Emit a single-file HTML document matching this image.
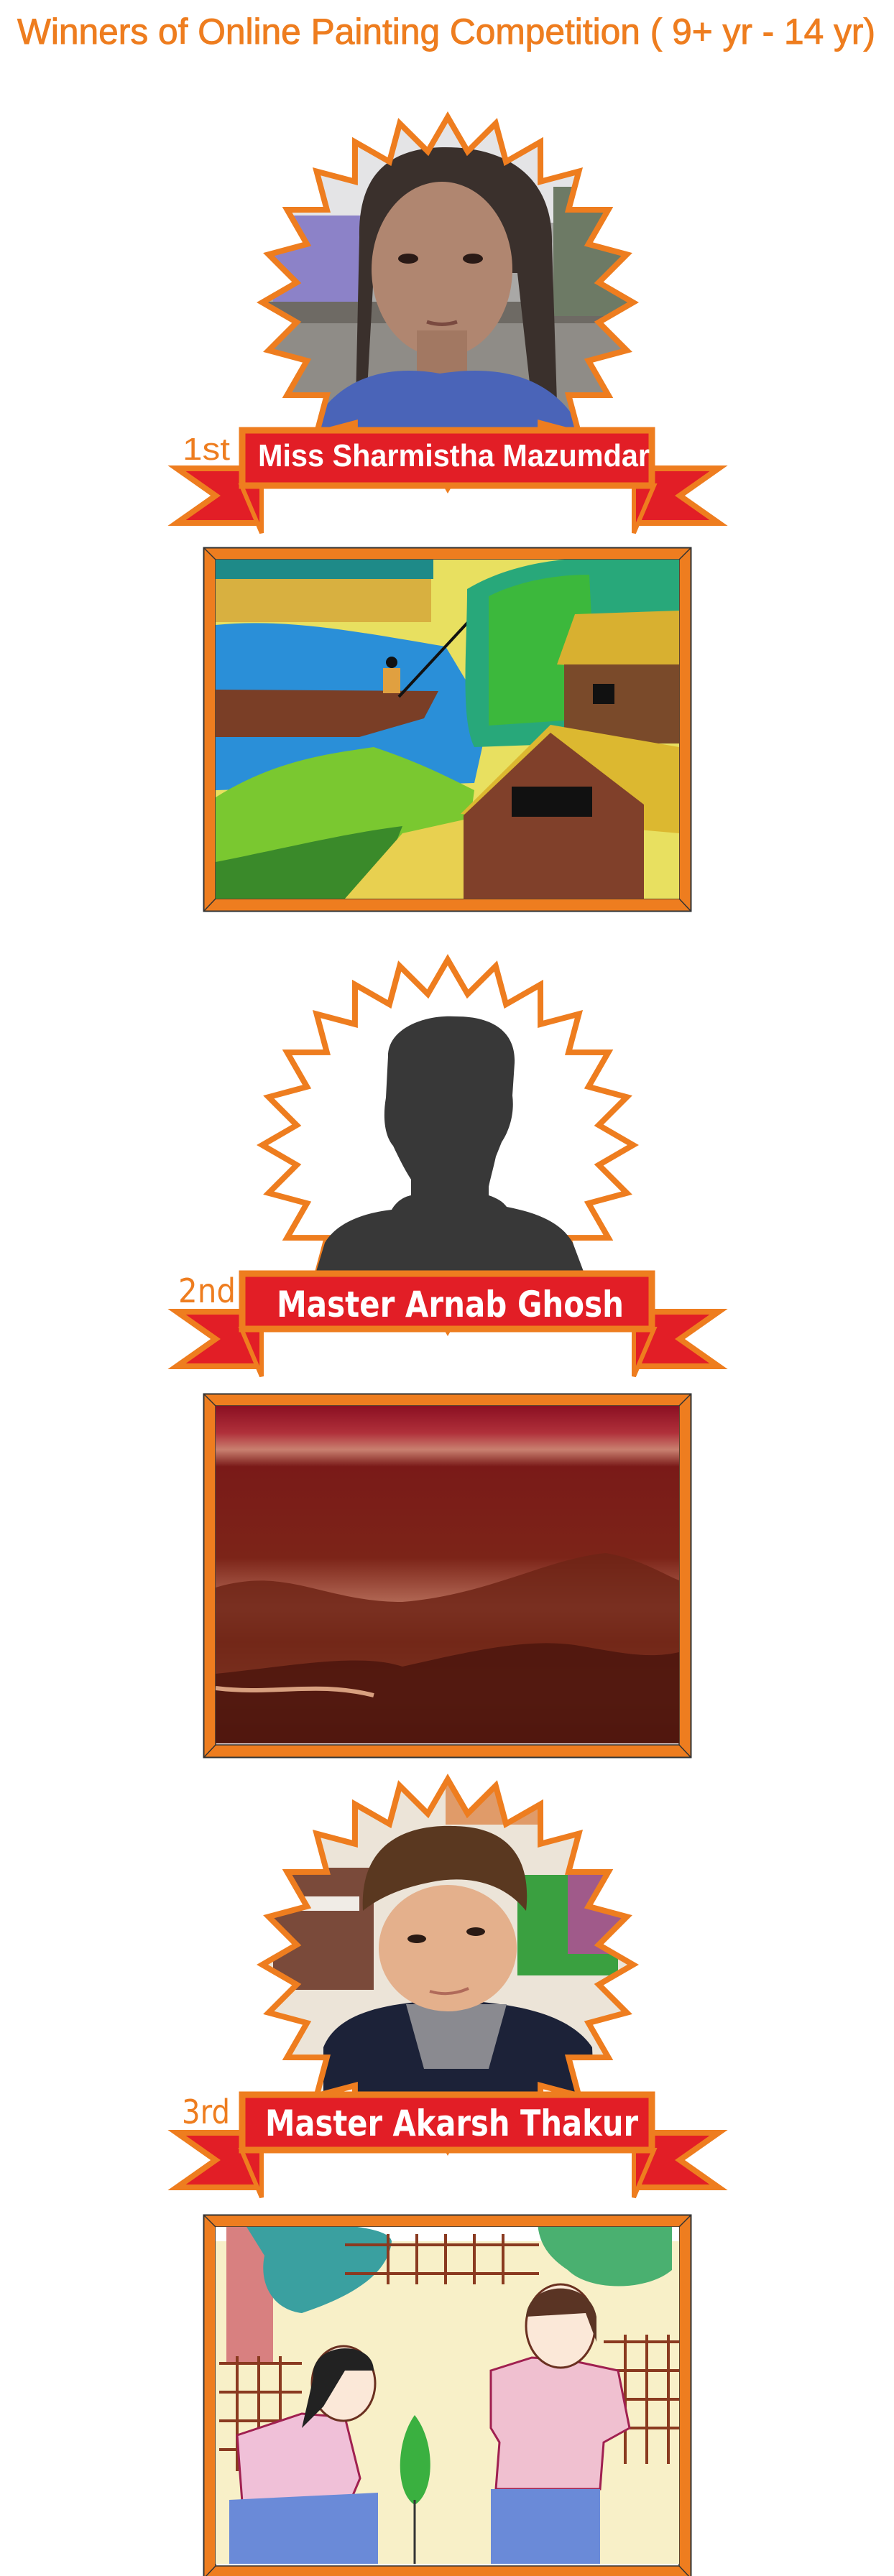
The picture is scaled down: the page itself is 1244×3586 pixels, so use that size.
<!DOCTYPE html>
<html><head><meta charset="utf-8">
<style>
html,body{margin:0;padding:0;background:#fff;}
svg{display:block;}
</style></head>
<body>
<svg width="1244" height="3586" viewBox="0 0 1244 3586" xmlns="http://www.w3.org/2000/svg">
<defs>
<polygon id="star" points="0,-258 27.7,-210.2 66.8,-249.2 81.1,-195.9 129,-223.4 129.1,-168.2 182.4,-182.4 168.2,-129.1 223.4,-129 195.9,-81.1 249.2,-66.8 210.2,-27.7 258,0 210.2,27.7 249.2,66.8 195.9,81.1 223.4,129 168.2,129.1 182.4,182.4 129.1,168.2 129,223.4 81.1,195.9 66.8,249.2 27.7,210.2 0,258 -27.7,210.2 -66.8,249.2 -81.1,195.9 -129,223.4 -129.1,168.2 -182.4,182.4 -168.2,129.1 -223.4,129 -195.9,81.1 -249.2,66.8 -210.2,27.7 -258,0 -210.2,-27.7 -249.2,-66.8 -195.9,-81.1 -223.4,-129 -168.2,-129.1 -182.4,-182.4 -129.1,-168.2 -129,-223.4 -81.1,-195.9 -66.8,-249.2 -27.7,-210.2"/>
<clipPath id="c1"><use href="#star" transform="translate(623,421)"/></clipPath>
<clipPath id="c3"><use href="#star" transform="translate(623,2735)"/></clipPath>
<clipPath id="p1"><rect x="300" y="779" width="645" height="472"/></clipPath>
<clipPath id="p2"><rect x="300" y="1957" width="645" height="470"/></clipPath>
<clipPath id="p3"><rect x="300" y="3100" width="645" height="469"/></clipPath>
<linearGradient id="g2" x1="0" y1="0" x2="0" y2="1">
<stop offset="0" stop-color="#8a0f22"/><stop offset="0.08" stop-color="#b0303a"/>
<stop offset="0.13" stop-color="#c98070"/><stop offset="0.18" stop-color="#7a1a18"/>
<stop offset="0.45" stop-color="#7c2418"/><stop offset="0.6" stop-color="#b8705c"/>
<stop offset="0.7" stop-color="#8a3a22"/><stop offset="0.85" stop-color="#c07a58"/>
<stop offset="1" stop-color="#5a1a10"/></linearGradient>
<g id="ribbon">
<polygon points="246,652 362,652 362,728 246,728 300,690" fill="#e21e26" stroke="#ee7d1f" stroke-width="8" stroke-linejoin="miter"/>
<polygon points="1000,652 884,652 884,728 1000,728 946,690" fill="#e21e26" stroke="#ee7d1f" stroke-width="8"/>
<polygon points="336,676 364,676 364,742" fill="#e21e26" stroke="#ee7d1f" stroke-width="6"/>
<polygon points="910,676 882,676 882,742" fill="#e21e26" stroke="#ee7d1f" stroke-width="6"/>
<rect x="337" y="599" width="570" height="77" fill="#e21e26" stroke="#ee7d1f" stroke-width="9"/>
</g>
<g id="frame">
<rect x="283.5" y="0.5" width="678" height="506" fill="#ee7d1f" stroke="#333" stroke-width="2"/>
<rect x="300" y="17" width="645" height="472" fill="#fff" stroke="#333" stroke-width="1.5"/>
<path d="M284 1 L300 17 M961 1 L945 17 M284 506 L300 489 M961 506 L945 489" stroke="#333" stroke-width="1.5"/>
</g>
</defs>

<text x="24" y="61" font-family="Liberation Sans, sans-serif" font-size="50" fill="#ee7d1f" stroke="#ee7d1f" stroke-width="0.9" textLength="1194" lengthAdjust="spacingAndGlyphs">Winners of Online Painting Competition ( 9+ yr - 14 yr)</text>

<!-- ===== Section 1 ===== -->
<g clip-path="url(#c1)">
<rect x="360" y="160" width="530" height="520" fill="#a9a8a6"/>
<rect x="360" y="160" width="530" height="150" fill="#e4e4e6"/>
<rect x="380" y="300" width="130" height="130" fill="#8c82c8"/>
<rect x="360" y="420" width="530" height="30" fill="#6e6a64"/>
<rect x="360" y="450" width="530" height="230" fill="#8f8c87"/>
<rect x="770" y="260" width="120" height="180" fill="#6d7a65"/>
<path d="M500 330 C498 240 545 205 620 205 C710 205 770 250 768 340 L775 560 L740 560 L720 380 L520 380 L510 560 L495 560 Z" fill="#3a302c"/>
<ellipse cx="615" cy="375" rx="98" ry="122" fill="#b08670"/>
<rect x="580" y="460" width="70" height="60" fill="#a27862"/>
<path d="M430 600 C470 520 545 508 612 520 C690 508 770 520 810 600 L810 700 L430 700 Z" fill="#4a64b8"/>
<ellipse cx="568" cy="360" rx="14" ry="7" fill="#2a1a16"/>
<ellipse cx="658" cy="360" rx="14" ry="7" fill="#2a1a16"/>
<path d="M594 448 Q615 455 636 448" stroke="#7a4a40" stroke-width="5" fill="none"/>
</g>
<use href="#star" transform="translate(623,421)" fill="none" stroke="#ee7d1f" stroke-width="8"/>
<use href="#ribbon"/>
<text x="254" y="640" font-family="Liberation Sans, sans-serif" font-size="44" fill="#ee7d1f" textLength="66" lengthAdjust="spacingAndGlyphs">1st</text>
<text x="359" y="649" font-family="Liberation Sans, sans-serif" font-weight="bold" font-size="44" fill="#fff" textLength="545" lengthAdjust="spacingAndGlyphs">Miss Sharmistha Mazumdar</text>

<use href="#frame" transform="translate(0,762)"/>
<g clip-path="url(#p1)">
<rect x="300" y="779" width="645" height="472" fill="#e8e060"/>
<rect x="300" y="776" width="303" height="30" fill="#1e8a88"/>
<rect x="300" y="806" width="300" height="60" fill="#d8b040"/>
<path d="M300 870 C400 860 500 880 620 900 L680 1000 L660 1090 L300 1100 Z" fill="#2a8fd8"/>
<path d="M300 960 L610 962 L590 1000 L500 1026 L300 1026 Z" fill="#7a3e26"/>
<path d="M555 970 L655 862" stroke="#111" stroke-width="4"/>
<rect x="533" y="930" width="24" height="35" fill="#e0a040"/>
<circle cx="545" cy="922" r="8" fill="#111"/>
<path d="M300 1110 C380 1060 450 1050 520 1040 C580 1060 620 1080 660 1100 L640 1251 L300 1251 Z" fill="#7ac830"/>
<path d="M300 1200 C400 1180 480 1160 560 1150 L520 1251 L300 1251 Z" fill="#3a8a2a"/>
<path d="M480 1251 L560 1160 L650 1140 L650 1251 Z" fill="#e8d050"/>
<path d="M650 820 C700 790 760 780 800 778 L945 778 L945 1030 L660 1040 C640 1000 650 900 650 820 Z" fill="#28a87a"/>
<path d="M680 830 C720 810 770 800 820 800 L830 1000 L680 1010 Z" fill="#3cb83c"/>
<path d="M775 925 L800 855 L945 850 L945 935 Z" fill="#d8b030"/>
<rect x="785" y="925" width="160" height="110" fill="#7a4a2a"/>
<rect x="825" y="952" width="30" height="28" fill="#111"/>
<path d="M641 1133 L766 1009 L945 1040 L945 1160 Z" fill="#dcb830"/>
<path d="M645 1135 L766 1020 L896 1120 L896 1254 L645 1254 Z" fill="#80402a"/>
<rect x="712" y="1095" width="112" height="42" fill="#111"/>
</g>

<!-- ===== Section 2 ===== -->
<use href="#star" transform="translate(623,1594)" fill="#fff" stroke="#ee7d1f" stroke-width="8"/>
<path d="M540 1470 C540 1432 590 1412 635 1415 C690 1415 718 1440 716 1480 L713 1525 C716 1548 710 1572 698 1590 L690 1610 C686 1628 682 1642 680 1652 L680 1664 C692 1668 700 1673 705 1680 C745 1688 780 1700 797 1730 L812 1770 L440 1770 L452 1730 C470 1700 510 1688 545 1684 C552 1672 562 1666 572 1664 L572 1642 C563 1628 555 1612 547 1595 C536 1582 532 1558 537 1528 Z" fill="#383838"/>
<use href="#ribbon" transform="translate(0,1174)"/>
<text x="248" y="1813" font-family="DejaVu Sans, sans-serif" font-size="46" fill="#ee7d1f" textLength="80" lengthAdjust="spacingAndGlyphs">2nd</text>
<text x="385" y="1833" font-family="DejaVu Sans, sans-serif" font-weight="bold" font-size="50" fill="#fff" textLength="483" lengthAdjust="spacingAndGlyphs">Master Arnab Ghosh</text>

<use href="#frame" transform="translate(0,1940)"/>
<g clip-path="url(#p2)">
<rect x="300" y="1957" width="645" height="470" fill="url(#g2)"/>
<path d="M300 2210 C400 2180 450 2230 560 2230 C680 2220 760 2170 843 2162 C890 2170 920 2190 945 2200 L945 2427 L300 2427 Z" fill="#6e2416" opacity="0.85"/>
<path d="M300 2330 C400 2320 500 2300 560 2320 C650 2300 730 2280 800 2290 C860 2300 900 2310 945 2300 L945 2427 L300 2427 Z" fill="#4a140c" opacity="0.8"/>
<path d="M300 2350 C380 2360 440 2340 520 2360" stroke="#d8a080" stroke-width="6" fill="none"/>
</g>

<!-- ===== Section 3 ===== -->
<g clip-path="url(#c3)">
<rect x="360" y="2470" width="530" height="530" fill="#ece4d8"/>
<rect x="380" y="2600" width="140" height="170" fill="#7a4a3a"/>
<rect x="400" y="2640" width="100" height="20" fill="#f0ece6"/>
<rect x="720" y="2610" width="140" height="140" fill="#3aa040"/>
<rect x="790" y="2600" width="100" height="120" fill="#a05a8a"/>
<rect x="620" y="2480" width="200" height="60" fill="#d86a20" opacity="0.6"/>
<path d="M450 2850 C470 2800 540 2790 600 2785 L650 2785 C710 2790 790 2800 824 2850 L830 3000 L450 3000 Z" fill="#1c2238"/>
<path d="M565 2790 L590 2880 L680 2880 L705 2790 Z" fill="#8a8a90"/>
<ellipse cx="623" cy="2712" rx="96" ry="88" fill="#e4b08c"/>
<path d="M505 2660 C500 2570 560 2540 630 2542 C710 2542 740 2590 732 2660 C700 2620 650 2610 600 2620 C560 2628 530 2640 505 2660 Z" fill="#5a3820"/>
<ellipse cx="580" cy="2699" rx="13" ry="6" fill="#2a1a14"/>
<ellipse cx="662" cy="2689" rx="13" ry="6" fill="#2a1a14"/>
<path d="M598 2772 Q625 2780 652 2768" stroke="#b06a5a" stroke-width="4" fill="none"/>
</g>
<use href="#star" transform="translate(623,2735)" fill="none" stroke="#ee7d1f" stroke-width="8"/>
<use href="#ribbon" transform="translate(0,2317)"/>
<text x="253" y="2956" font-family="DejaVu Sans, sans-serif" font-size="46" fill="#ee7d1f" textLength="67" lengthAdjust="spacingAndGlyphs">3rd</text>
<text x="369" y="2973" font-family="DejaVu Sans, sans-serif" font-weight="bold" font-size="50" fill="#fff" textLength="519" lengthAdjust="spacingAndGlyphs">Master Akarsh Thakur</text>

<use href="#frame" transform="translate(0,3083)"/>
<g clip-path="url(#p3)">
<rect x="300" y="3100" width="645" height="469" fill="#f8f0c8"/>
<rect x="300" y="3100" width="645" height="20" fill="#fff"/>
<path d="M315 3100 L380 3100 L380 3290 L315 3290 Z" fill="#d88080"/>
<path d="M340 3095 C380 3095 540 3090 545 3120 C540 3170 480 3200 420 3220 C380 3215 360 3180 368 3140 Z" fill="#3aa0a0"/>
<path d="M748 3095 L935 3095 L935 3160 C900 3190 820 3190 790 3160 C760 3140 750 3120 748 3095 Z" fill="#4ab070"/>
<g stroke="#8a3a20" stroke-width="4" fill="none">
<path d="M480 3125 L750 3125 M480 3165 L750 3165"/>
<path d="M540 3110 L540 3180 M580 3110 L580 3180 M620 3110 L620 3180 M660 3110 L660 3180 M700 3110 L700 3180"/>
<path d="M305 3290 L420 3290 M305 3330 L420 3330 M305 3370 L420 3370 M305 3410 L420 3410"/>
<path d="M330 3280 L330 3440 M360 3280 L360 3440 M390 3280 L390 3440"/>
<path d="M840 3260 L945 3260 M840 3300 L945 3300 M840 3340 L945 3340 M840 3380 L945 3380"/>
<path d="M870 3250 L870 3430 M900 3250 L900 3430 M930 3250 L930 3430"/>
</g>
<path d="M683 3300 L740 3282 L790 3285 L860 3300 L876 3380 L840 3400 L835 3465 L690 3465 L695 3400 L683 3380 Z" fill="#f0c0d0" stroke="#a02050" stroke-width="3"/>
<rect x="683" y="3465" width="152" height="110" fill="#6a8ad8"/>
<ellipse cx="780" cy="3238" rx="48" ry="58" fill="#fbe8d8" stroke="#6a3020" stroke-width="3"/>
<path d="M732 3225 C735 3175 820 3170 830 3225 L830 3260 L815 3220 Z" fill="#5a3424"/>
<path d="M330 3390 L420 3360 L480 3365 L501 3450 L470 3523 L340 3523 Z" fill="#f0c0d8" stroke="#a02050" stroke-width="3"/>
<path d="M319 3480 L526 3470 L526 3569 L319 3569 Z" fill="#6a8ad8"/>
<ellipse cx="478" cy="3318" rx="44" ry="52" fill="#fbe8d8" stroke="#6a3020" stroke-width="3"/>
<path d="M436 3310 C430 3260 520 3255 520 3300 L480 3300 L450 3350 L420 3380 Z" fill="#222"/>
<path d="M577 3362 C550 3400 550 3470 577 3487 C605 3470 607 3400 577 3362 Z" fill="#3ab040"/>
<path d="M577 3480 L577 3569" stroke="#333" stroke-width="3"/>
</g>
</svg>
</body></html>
